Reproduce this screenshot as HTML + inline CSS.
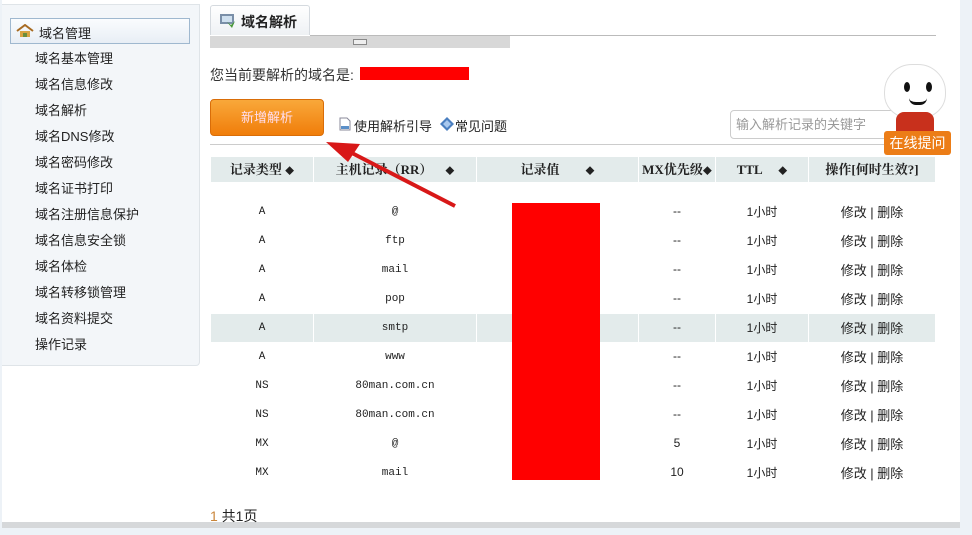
<!DOCTYPE html>
<html><head><meta charset="utf-8"><style>
*{margin:0;padding:0;box-sizing:border-box}
body{width:972px;height:535px;background:#edf2f7;font-family:"Liberation Sans","Noto Sans CJK SC",sans-serif;font-size:12px;color:#222;position:relative;overflow:hidden}
.white{position:absolute;left:2px;top:0;width:958px;height:522px;background:#fff}
.bar{position:absolute;left:2px;top:522px;width:958px;height:6px;background:#d6d8da}
.side{position:absolute;left:2px;top:4px;width:198px;height:362px;background:#f3f6f9;border:1px solid #dfe4e8;border-left:none;border-radius:0 0 4px 0}
.side .top{position:absolute;left:8px;top:13px;width:180px;height:26px;border:1px solid #9fb8cf;background:linear-gradient(#fafcfe,#e8eef5)}
.side .top span{position:absolute;left:28px;top:4px;font-size:13px}
.side .item{position:absolute;left:33px;font-size:13px}
.tab{position:absolute;left:210px;top:5px;width:100px;height:30px;background:linear-gradient(#fff,#eef1f4);border:1px solid #d5dadf;border-bottom:none;border-radius:3px 3px 0 0}
.tab b{position:absolute;left:30px;top:6px;font-size:14px}
.line{position:absolute;left:310px;top:35px;width:626px;height:1px;background:#bbb}
.gbar{position:absolute;left:210px;top:36px;width:300px;height:12px;background:#d8d8d8}
.abs{position:absolute}
.th{position:absolute;top:157px;height:25px;background:#e3ebeb;font-weight:bold;font-size:13px;line-height:25px;text-align:center;font-family:"Liberation Serif","Noto Serif CJK SC",serif}
.cell{position:absolute;text-align:center;font-size:11px;font-family:"Liberation Mono","Noto Sans CJK SC",monospace}
</style></head><body>
<div class="white"></div><div class="bar"></div>
<div class="side">
 <div class="top"><svg class="abs" style="left:5px;top:5px" width="18" height="14"><path d="M1 7L9 1L17 7" stroke="#a86b22" stroke-width="2" fill="none"/><rect x="4" y="7" width="10" height="6" fill="#d9a441"/><rect x="7" y="9" width="4" height="4" fill="#6b8e3a"/></svg><span>域名管理</span></div>
 <div class="item" style="top:43px">域名基本管理</div>
 <div class="item" style="top:69px">域名信息修改</div>
 <div class="item" style="top:95px">域名解析</div>
 <div class="item" style="top:121px">域名DNS修改</div>
 <div class="item" style="top:147px">域名密码修改</div>
 <div class="item" style="top:173px">域名证书打印</div>
 <div class="item" style="top:199px">域名注册信息保护</div>
 <div class="item" style="top:225px">域名信息安全锁</div>
 <div class="item" style="top:251px">域名体检</div>
 <div class="item" style="top:277px">域名转移锁管理</div>
 <div class="item" style="top:303px">域名资料提交</div>
 <div class="item" style="top:329px">操作记录</div>
</div>
<div class="tab"><svg class="abs" style="left:8px;top:7px" width="18" height="16"><rect x="1" y="1" width="14" height="10" fill="#7a8fa8"/><rect x="3" y="3" width="10" height="6" fill="#cfe0ef"/><path d="M8 9l4 3 4-4-3 7z" fill="#4a9a3a"/></svg><b>域名解析</b></div>
<div class="line"></div>
<div class="gbar"><div class="abs" style="left:143px;top:3px;width:14px;height:6px;border:1px solid #888;background:#eee"></div></div>
<div class="abs" style="left:210px;top:65px;font-size:14px;color:#333">您当前要解析的域名是:</div>
<div class="abs" style="left:360px;top:67px;width:109px;height:13px;background:#f00"></div>
<div class="abs" style="left:210px;top:99px;width:114px;height:37px;border-radius:4px;background:linear-gradient(#f9a83a,#f07d0a);border:1px solid #d96d08;color:#fde;text-align:center;line-height:36px;font-size:13px">新增解析</div>
<svg class="abs" style="left:339px;top:117px" width="12" height="14"><path d="M1 1h7l3 3v9H1z" fill="#fff" stroke="#889"/><rect x="2" y="9" width="8" height="3" fill="#5a8fc8"/></svg>
<div class="abs" style="left:354px;top:116px;font-size:13px">使用解析引导</div>
<svg class="abs" style="left:440px;top:117px" width="14" height="14"><path d="M7 0L14 7L7 14L0 7z" fill="#4a7fc0"/><path d="M7 3L11 7L7 11L3 7z" fill="#a8c8ee"/></svg>
<div class="abs" style="left:455px;top:116px;font-size:13px">常见问题</div>
<div class="abs" style="left:730px;top:110px;width:170px;height:29px;border:1px solid #ccc;border-radius:4px;background:#fff;color:#999;font-size:13px;line-height:27px;padding-left:5px">输入解析记录的关键字</div>
<div class="abs" style="left:210px;top:144px;width:726px;height:1px;background:#ccc"></div>
<div class="abs" style="left:884px;top:64px;width:62px;height:54px;background:#fff;border:1px solid #ddd;border-radius:28px 28px 24px 24px"></div>
<div class="abs" style="left:904px;top:82px;width:6px;height:10px;background:#111;border-radius:50%"></div>
<div class="abs" style="left:926px;top:82px;width:6px;height:10px;background:#111;border-radius:50%"></div>
<div class="abs" style="left:909px;top:98px;width:18px;height:7px;border-bottom:3px solid #111;border-radius:0 0 10px 10px"></div>
<div class="abs" style="left:896px;top:112px;width:38px;height:20px;background:#c8301c;border-radius:8px 8px 0 0"></div>
<div class="abs" style="left:884px;top:131px;width:67px;height:24px;background:#ec7d17;border-radius:3px;color:#fff;font-size:14px;line-height:24px;text-align:center">在线提问</div>
<div class="th" style="left:211px;width:102px">记录类型 <span style="font-size:9px">◆</span></div>
<div class="th" style="left:314px;width:162px">主机记录（RR） &nbsp; &nbsp;<span style="font-size:9px">◆</span></div>
<div class="th" style="left:477px;width:161px">记录值 &nbsp; &nbsp; &nbsp; &nbsp;<span style="font-size:9px">◆</span></div>
<div class="th" style="left:639px;width:76px">MX优先级<span style="font-size:9px">◆</span></div>
<div class="th" style="left:716px;width:92px">TTL &nbsp; &nbsp; <span style="font-size:9px">◆</span></div>
<div class="th" style="left:809px;width:126px">操作[何时生效?]</div>
<div class="abs" style="left:211px;top:314px;width:724px;height:28px;background:#e3ebeb"></div>
<div class="abs" style="left:313px;top:314px;width:1px;height:28px;background:#fff"></div>
<div class="abs" style="left:476px;top:314px;width:1px;height:28px;background:#fff"></div>
<div class="abs" style="left:638px;top:314px;width:1px;height:28px;background:#fff"></div>
<div class="abs" style="left:715px;top:314px;width:1px;height:28px;background:#fff"></div>
<div class="abs" style="left:808px;top:314px;width:1px;height:28px;background:#fff"></div>
<div id="rows"></div>
<div class="abs" style="left:512px;top:203px;width:88px;height:277px;background:#f00"></div>
<svg class="abs" style="left:320px;top:138px" width="140" height="75"><path d="M135 68L30 14" stroke="#d81818" stroke-width="4"/><path d="M6 4L40 6L28 24z" fill="#d81818"/></svg>
<div class="abs" style="left:210px;top:506px;font-size:14px"><span style="color:#c9853a">1</span> 共1页</div>
<script>
var d=[["A","@","--"],["A","ftp","--"],["A","mail","--"],["A","pop","--"],["A","smtp","--"],["A","www","--"],["NS","80man.com.cn","--"],["NS","80man.com.cn","--"],["MX","@","5"],["MX","mail","10"]];
var h="";d.forEach(function(r,i){var y=204+i*29;
h+='<div class="cell" style="left:211px;width:102px;top:'+(y+2)+'px">'+r[0]+'</div>';
h+='<div class="cell" style="left:314px;width:162px;top:'+(y+2)+'px">'+r[1]+'</div>';
h+='<div class="cell" style="left:639px;width:76px;top:'+(y)+'px;font-size:12px;font-family:Liberation Sans">'+r[2]+'</div>';
h+='<div class="cell" style="left:716px;width:92px;top:'+(y-1)+'px;font-size:12px;font-family:Liberation Sans,Noto Sans CJK SC">1小时</div>';
h+='<div class="cell" style="left:809px;width:126px;top:'+(y-2)+'px;font-size:13px;font-family:Liberation Sans,Noto Sans CJK SC">修改 | 删除</div>';});
document.getElementById("rows").innerHTML=h;
</script>
</body></html>
